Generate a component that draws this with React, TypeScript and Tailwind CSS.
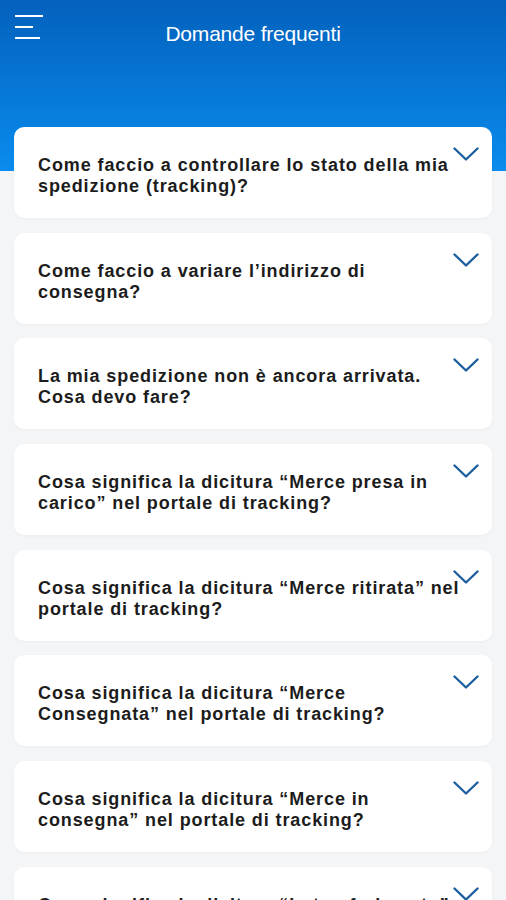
import React from "react";

const FAQS = [
  ["Come faccio a controllare lo stato della mia", "spedizione (tracking)?"],
  ["Come faccio a variare l’indirizzo di", "consegna?"],
  ["La mia spedizione non è ancora arrivata.", "Cosa devo fare?"],
  ["Cosa significa la dicitura “Merce presa in", "carico” nel portale di tracking?"],
  ["Cosa significa la dicitura “Merce ritirata” nel", "portale di tracking?"],
  ["Cosa significa la dicitura “Merce", "Consegnata” nel portale di tracking?"],
  ["Cosa significa la dicitura “Merce in", "consegna” nel portale di tracking?"],
  ["Cosa significa la dicitura “In trasferimento”", "nel portale di tracking?"],
];

function Chevron() {
  return (
    <svg width="26" height="15" viewBox="0 0 26 15" fill="none">
      <path d="M1.5 1.5 L13 12.5 L24.5 1.5" stroke="#1d5f9e" strokeWidth="2.4" strokeLinecap="round" strokeLinejoin="round" />
    </svg>
  );
}

export default function App() {
  return (
    <div className="relative h-[900px] w-[506px] overflow-hidden bg-[#f3f5f7] font-['Liberation_Sans',sans-serif]">
      {/* Header */}
      <div className="absolute inset-x-0 top-0 h-[171px] bg-gradient-to-b from-[#0461bd] to-[#0a8cee]" />

      <div className="relative">
        <div className="flex h-[66px] items-start px-[15px] pt-[14px]">
          <div className="flex w-[28px] flex-col gap-[9px] pt-[1px]">
            <div className="h-[2px] w-[28px] bg-white" />
            <div className="h-[2px] w-[18px] bg-white" />
            <div className="h-[2px] w-[25px] bg-white" />
          </div>
          <h1 className="-ml-[28px] mt-[4px] flex-1 text-center text-[21px] font-normal tracking-[-0.2px] text-white">
            Domande frequenti
          </h1>
        </div>

        {/* List */}
        <div className="mt-[61px] flex flex-col gap-[14.7px] px-[14px]">
          {FAQS.map((lines, i) => (
            <div key={i} className="relative h-[91px] rounded-[10px] bg-white pl-[24px] pr-[22px] pt-[28px] shadow-[0_1px_3px_rgba(0,0,0,0.04)]">
              <p className="whitespace-nowrap text-[18px] font-bold leading-[21px] tracking-[0.9px] text-[#1c1c1c]">
                {lines[0]}
                <br />
                {lines[1]}
              </p>
              <div className="absolute right-[13px] top-[20px]">
                <Chevron />
              </div>
            </div>
          ))}
        </div>
      </div>
    </div>
  );
}
